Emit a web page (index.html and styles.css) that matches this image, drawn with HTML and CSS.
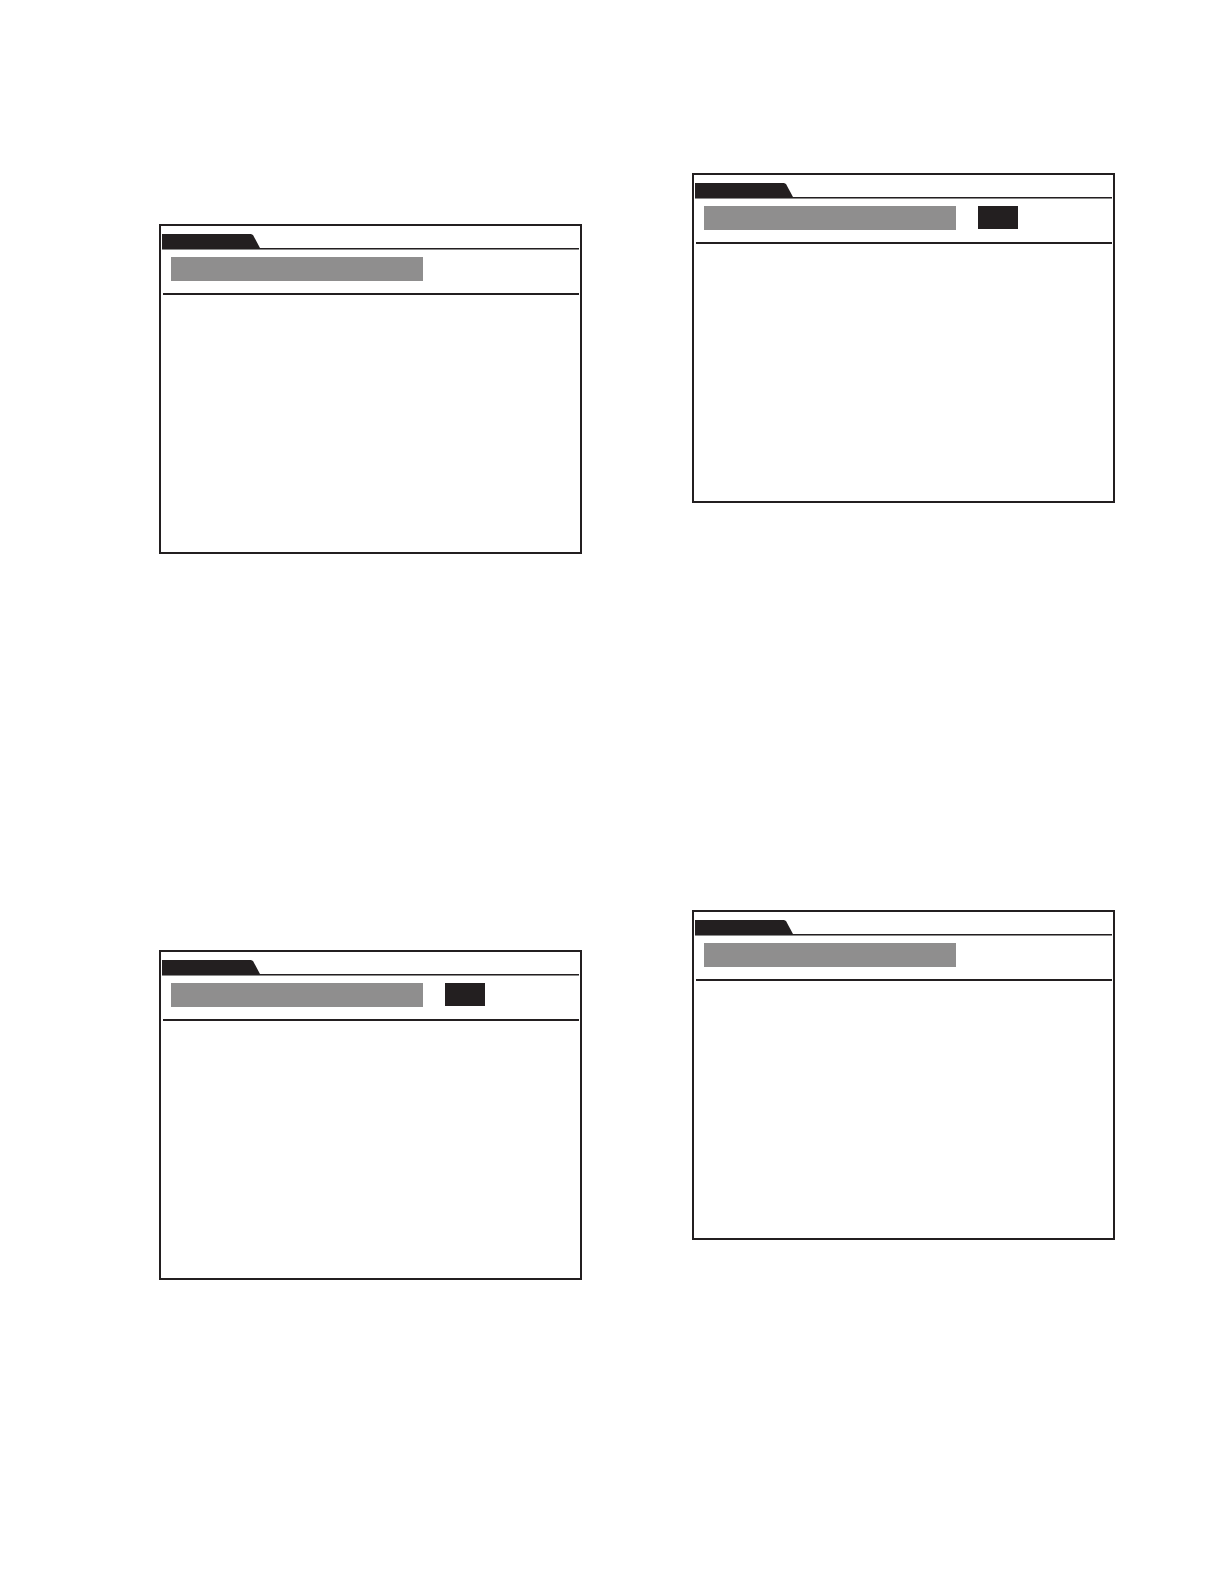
FILE: index.html
```html
<!DOCTYPE html>
<html lang="en">
<head>
<meta charset="utf-8">
<title>Panels</title>
<link rel="stylesheet" href="styles.css">
</head>
<body>
<main class="page">
  <section class="column column-left">
    <div class="panel">
      <div class="tab"></div>
      <div class="rule-thin"></div>
      <div class="field-row">
        <div class="field"></div>
      </div>
      <div class="rule-thick"></div>
    </div>
    <div class="panel">
      <div class="tab"></div>
      <div class="rule-thin"></div>
      <div class="field-row">
        <div class="field"></div>
        <div class="button"></div>
      </div>
      <div class="rule-thick"></div>
    </div>
  </section>
  <section class="column column-right">
    <div class="panel">
      <div class="tab"></div>
      <div class="rule-thin"></div>
      <div class="field-row">
        <div class="field"></div>
        <div class="button"></div>
      </div>
      <div class="rule-thick"></div>
    </div>
    <div class="panel">
      <div class="tab"></div>
      <div class="rule-thin"></div>
      <div class="field-row">
        <div class="field"></div>
      </div>
      <div class="rule-thick"></div>
    </div>
  </section>
</main>
</body>
</html>
```

FILE: styles.css
```css
html, body {
  margin: 0;
  padding: 0;
  background: #ffffff;
  font-family: "Liberation Sans", Arial, sans-serif;
}

.page {
  display: flex;
  align-items: flex-start;
  gap: 110px;
  padding-left: 159px;
  width: 1219px;
  height: 1587px;
  box-sizing: border-box;
}

.column {
  display: flex;
  flex-direction: column;
}

.column-left {
  padding-top: 224px;
  gap: 396px;
}

.column-right {
  padding-top: 173px;
  gap: 407px;
}

.panel {
  width: 423px;
  height: 330px;
  box-sizing: border-box;
  border: 2px solid #231f20;
  display: flex;
  flex-direction: column;
}

.tab {
  margin-top: 8px;
  margin-left: 1px;
  width: 98px;
  height: 14px;
  background: #231f20;
  clip-path: polygon(0 0, 89px 0, 91px 1px, 98px 100%, 0 100%);
}

.rule-thin {
  margin: 0 1px;
  height: 2px;
  background: linear-gradient(#231f20 50%, #8a8a8a 50%);
}

.field-row {
  display: flex;
  align-items: flex-start;
  margin-top: 7px;
  padding-left: 10px;
  height: 24px;
}

.field {
  width: 252px;
  height: 24px;
  background: #8f8e8e;
}

.button {
  margin-left: 22px;
  width: 40px;
  height: 23px;
  background: #231f20;
}

.rule-thick {
  margin: 12px 1px 0 2px;
  height: 2px;
  background: #231f20;
}
```
